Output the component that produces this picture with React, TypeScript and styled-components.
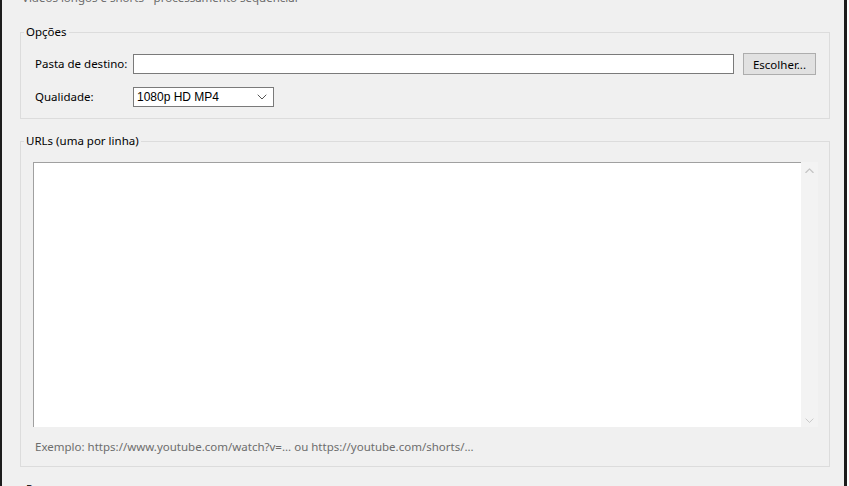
import React from 'react'
import styled, {createGlobalStyle} from 'styled-components'

const GlobalStyle = createGlobalStyle`
  html, body {
    margin: 0;
    padding: 0;
    background: #ffffff;
  }
  body {
    font-family: "Noto Sans", "Open Sans", sans-serif;
    font-size: 11.5px;
    color: #000000;
  }
`

const Window = styled.div`
  box-sizing: border-box;
  width: 847px;
  height: 486px;
  overflow: hidden;
  background: #f0f0f0;
  border-left: 2px solid #1c1c1c;
  border-right: 3px solid #1c1c1c;
  padding: 0 14px 0 18px;
`

const Subtitle = styled.div`
  margin-top: -10px;
  padding-left: 2px;
  line-height: 16px;
  color: #6a6a6a;
`

const Group = styled.fieldset<{$pt: number; $px: number; $mt?: number}>`
  margin: ${p => p.$mt ?? 14}px 0 0;
  border: 1px solid #dcdcdc;
  padding: ${p => p.$pt}px ${p => p.$px - 1}px 11px ${p => p.$px}px;
  min-width: 0;

  & > legend {
    margin-left: ${p => 3 - p.$px}px;
  }
`

const Legend = styled.legend`
  padding: 0 2px;
  line-height: 16px;
`

const OptionsGrid = styled.div`
  display: grid;
  grid-template-columns: 89px 1fr 73px;
  column-gap: 9px;
  row-gap: 12px;
  align-items: center;
`

const FieldLabel = styled.span`
  line-height: 16px;
  white-space: nowrap;
`

const Entry = styled.input`
  box-sizing: border-box;
  height: 20px;
  width: 100%;
  border: 1px solid #7a7a7a;
  background: #ffffff;
  margin: 0;
  padding: 0 3px;
  font: inherit;
  outline: none;
`

const Button = styled.button`
  box-sizing: border-box;
  height: 22px;
  width: 73px;
  margin: 0;
  padding: 0;
  border: 1px solid #adadad;
  background: #e1e1e1;
  font: inherit;
  color: #000000;
`

const Combo = styled.div`
  box-sizing: border-box;
  display: flex;
  align-items: center;
  justify-content: space-between;
  width: 141px;
  height: 20px;
  border: 1px solid #7a7a7a;
  background: #ffffff;
  padding: 0 6px 0 3px;
  font-family: "Liberation Sans", Arial, sans-serif;
  font-size: 12px;
`

const TextBox = styled.div`
  display: flex;
  height: 265px;
`

const UrlArea = styled.textarea`
  flex: 1;
  box-sizing: border-box;
  margin: 0;
  resize: none;
  border: none;
  border-top: 1px solid #a0a0a0;
  border-left: 1px solid #a0a0a0;
  background: #ffffff;
  padding: 2px 4px;
  font: inherit;
  outline: none;
`

const Scrollbar = styled.div`
  width: 17px;
  display: flex;
  flex-direction: column;
  justify-content: space-between;
  align-items: center;
  padding: 6px 0 4px;
  box-sizing: border-box;
  background: #f3f3f3;
`

const Hint = styled.div`
  margin-top: 12px;
  line-height: 16px;
  color: #6d6d6d;
  padding-left: 2px;
`

const Chevron = ({up, color, size}: {up?: boolean; color: string; size: number}) => (
  <svg width={size} height={size * 0.6} viewBox="0 0 10 6" fill="none">
    <polyline
      points={up ? '1,5 5,1 9,5' : '1,1 5,5 9,1'}
      stroke={color}
      strokeWidth={up ? 1.4 : 1}
      strokeLinecap="round"
      strokeLinejoin="round"
    />
  </svg>
)

export default function App() {
  return (
    <>
      <GlobalStyle />
      <Window>
        <Subtitle>Vídeos longos e shorts - processamento sequencial</Subtitle>

        <Group $pt={13} $px={14} $mt={18}>
          <Legend>Opções</Legend>
          <OptionsGrid>
            <FieldLabel>Pasta de destino:</FieldLabel>
            <Entry defaultValue="" />
            <Button>Escolher...</Button>
            <FieldLabel>Qualidade:</FieldLabel>
            <Combo>
              <span>1080p HD MP4</span>
              <Chevron color="#555555" size={10} />
            </Combo>
          </OptionsGrid>
        </Group>

        <Group $pt={13} $px={12}>
          <Legend>URLs (uma por linha)</Legend>
          <TextBox>
            <UrlArea spellCheck={false} />
            <Scrollbar>
              <Chevron up color="#c4c4c4" size={9} />
              <Chevron color="#c4c4c4" size={9} />
            </Scrollbar>
          </TextBox>
          <Hint>Exemplo: https://www.youtube.com/watch?v=... ou https://youtube.com/shorts/...</Hint>
        </Group>

        <Group $pt={12} $px={12}>
          <Legend>Progresso</Legend>
        </Group>
      </Window>
    </>
  )
}
